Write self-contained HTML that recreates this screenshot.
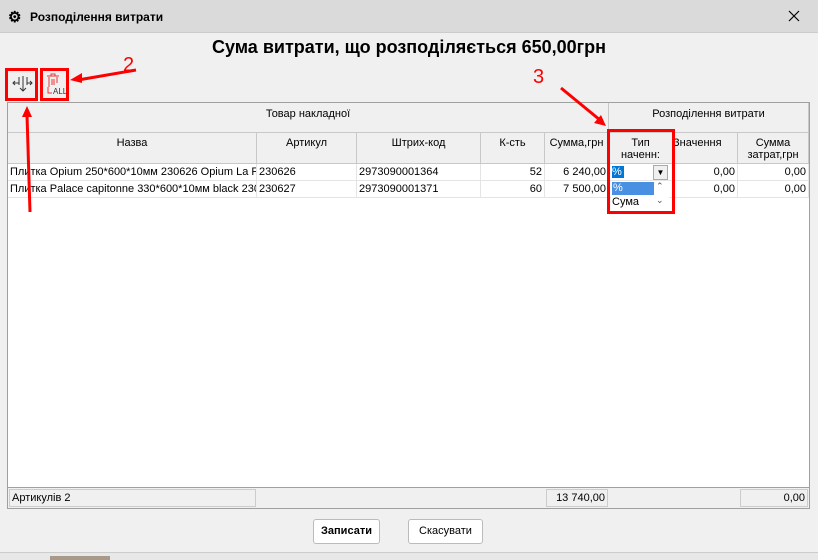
<!DOCTYPE html>
<html><head><meta charset="utf-8"><style>
*{box-sizing:border-box;margin:0;padding:0}
body{width:818px;height:560px;background:#f0f0f0;font-family:"Liberation Sans",sans-serif;font-size:11px;color:#000;position:relative;overflow:hidden}
.a{position:absolute}
.tb{left:0;top:0;width:818px;height:33px;background:#dadada;border-bottom:1px solid #ccc}
.hd{background:#f0f0f0;border-right:1px solid #c8c8c8;border-bottom:1px solid #c8c8c8;text-align:center}
.c{height:17px;line-height:16px;border-right:1px solid #e4e4e4;border-bottom:1px solid #e4e4e4;white-space:nowrap;overflow:hidden;padding:0 2px}
.r{text-align:right}
.red{border:3px solid #f00}
</style></head><body>
<div class="a tb"></div>
<div class="a" style="left:8px;top:8px;font-size:15px;font-weight:bold">⚙</div>
<div class="a" style="left:30px;top:10px;font-size:12px;font-weight:bold">Розподілення витрати</div>
<svg class="a" style="left:788px;top:10px" width="12" height="12"><path d="M1 1l10 10M11 1L1 11" stroke="#000" stroke-width="1.2"/></svg>
<div class="a" style="left:0;top:37px;width:818px;text-align:center;font-size:18px;font-weight:bold">Сума витрати, що розподіляється 650,00грн</div>
<!-- toolbar -->
<div class="a red" style="left:5px;top:68px;width:33px;height:33px"></div>
<svg class="a" style="left:12px;top:74px" width="22" height="20"><path d="M7 3v8M3 7l-2 2 2 2M1 9h6M11 2v15M8 14l3 3 3-3M15 3v8M15 9h5M18 7l2 2-2 2" stroke="#333" fill="none"/></svg>
<div class="a red" style="left:40px;top:68px;width:29px;height:33px"></div>
<svg class="a" style="left:45px;top:73px" width="22" height="24"><path d="M2 3h12M6 3V1h4v2M4 4v10M12 4v6M7 6v6M9 6v6M3 14v6h4" stroke="#e33" fill="none"/><text x="8" y="21" font-size="8" font-family="Liberation Sans" fill="#333">ALL</text></svg>
<div class="a" style="left:123px;top:54px;font-size:20px;color:#f00">2</div>
<div class="a" style="left:533px;top:66px;font-size:20px;color:#f00">3</div>
<div class="a" style="left:23px;top:230px;font-size:20px;color:#f00">1</div>
<!-- grid -->
<div class="a" style="left:7px;top:102px;width:803px;height:407px;background:#fff;border:1px solid #a0a0a0"></div>
<div class="a hd" style="left:8px;top:103px;width:601px;height:30px;line-height:22px">Товар накладної</div>
<div class="a hd" style="left:609px;top:103px;width:200px;height:30px;line-height:22px">Розподілення витрати</div>
<div class="a hd" style="left:8px;top:133px;width:249px;height:31px;padding-top:4px">Назва</div>
<div class="a hd" style="left:257px;top:133px;width:100px;height:31px;padding-top:4px">Артикул</div>
<div class="a hd" style="left:357px;top:133px;width:124px;height:31px;padding-top:4px">Штрих-код</div>
<div class="a hd" style="left:481px;top:133px;width:64px;height:31px;padding-top:4px">К-сть</div>
<div class="a hd" style="left:545px;top:133px;width:64px;height:31px;padding-top:4px">Сумма,грн</div>
<div class="a hd" style="left:609px;top:133px;width:64px;height:31px;padding-top:4px;line-height:12px">Тип<br>наченн:</div>
<div class="a hd" style="left:673px;top:133px;width:65px;height:31px;padding-top:4px;text-align:left">Значення</div>
<div class="a hd" style="left:738px;top:133px;width:71px;height:31px;padding-top:4px;line-height:12px">Сумма<br>затрат,грн</div>
<div class="a" style="left:8px;top:164px;display:flex"><div class="c" style="width:249px">Плитка Opium 250*600*10мм 230626 Opium La Fa</div><div class="c" style="width:100px">230626</div><div class="c" style="width:124px">2973090001364</div><div class="c r" style="width:64px">52</div><div class="c r" style="width:64px">6 240,00</div><div class="c" style="width:64px"></div><div class="c r" style="width:65px">0,00</div><div class="c r" style="width:71px">0,00</div></div>
<div class="a" style="left:8px;top:181px;display:flex"><div class="c" style="width:249px">Плитка Palace capitonne 330*600*10мм black 230€</div><div class="c" style="width:100px">230627</div><div class="c" style="width:124px">2973090001371</div><div class="c r" style="width:64px">60</div><div class="c r" style="width:64px">7 500,00</div><div class="c" style="width:64px"></div><div class="c r" style="width:65px">0,00</div><div class="c r" style="width:71px">0,00</div></div>
<!-- dropdown -->
<div class="a" style="left:612px;top:166px;width:12px;height:12px;background:#0078d7;color:#fff;line-height:12px">%</div>
<div class="a" style="left:653px;top:165px;width:15px;height:15px;border:1px solid #aaa;background:#f0f0f0;font-size:8px;text-align:center;line-height:13px">▼</div>
<div class="a" style="left:611px;top:181px;width:58px;height:30px;background:#fff"></div>
<div class="a" style="left:612px;top:182px;width:42px;height:13px;background:#4a90e2;color:#fff;line-height:13px;padding-left:1px">%</div>
<div class="a" style="left:612px;top:196px;line-height:13px">Сума</div>
<div class="a" style="left:656px;top:181px;font-size:9px;color:#555">⌃</div>
<div class="a" style="left:656px;top:195px;font-size:9px;color:#555">⌄</div>
<div class="a red" style="left:607px;top:129px;width:68px;height:85px"></div>
<!-- footer -->
<div class="a" style="left:7px;top:487px;width:803px;height:22px;background:#f0f0f0;border:1px solid #a0a0a0"></div>
<div class="a" style="left:9px;top:489px;width:247px;height:18px;border:1px solid #ccc;line-height:16px;padding-left:2px">Артикулів 2</div>
<div class="a" style="left:546px;top:489px;width:62px;height:18px;border:1px solid #ccc;line-height:16px;text-align:right;padding-right:2px">13 740,00</div>
<div class="a" style="left:740px;top:489px;width:68px;height:18px;border:1px solid #ccc;line-height:16px;text-align:right;padding-right:2px">0,00</div>
<div class="a" style="left:313px;top:519px;width:67px;height:25px;background:#fff;border:1px solid #bbb;border-radius:3px;text-align:center;line-height:23px;font-weight:bold">Записати</div>
<div class="a" style="left:408px;top:519px;width:75px;height:25px;background:#fff;border:1px solid #bbb;border-radius:3px;text-align:center;line-height:23px">Скасувати</div>
<div class="a" style="left:0;top:552px;width:818px;height:8px;background:#e8e8e8;border-top:1px solid #ccc"></div>
<div class="a" style="left:50px;top:556px;width:60px;height:4px;background:#a89a8a"></div>
<svg class="a" style="left:0;top:0" width="818" height="560"><g stroke="#f00" stroke-width="3" fill="#f00"><line x1="136" y1="70" x2="78" y2="80"/><line x1="30" y1="212" x2="27" y2="115"/><line x1="561" y1="88" x2="600" y2="120"/></g>
<path d="M70 80l12-7 0 10z" fill="#f00"/><path d="M27 106l-5 11 10 0z" fill="#f00"/><path d="M606 126l-12-3 7-8z" fill="#f00"/></svg>
</body></html>
